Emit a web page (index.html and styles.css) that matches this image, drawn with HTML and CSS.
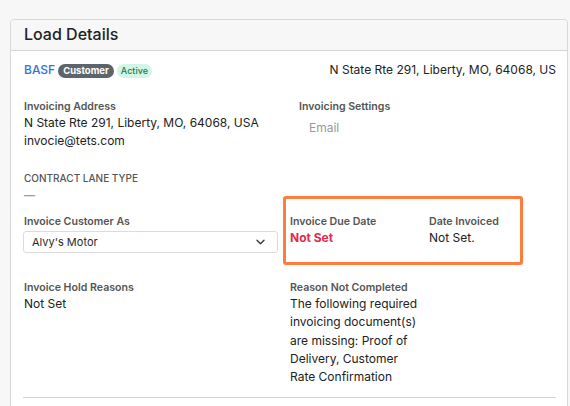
FILE: index.html
```html
<!DOCTYPE html>
<html>
<head>
<meta charset="utf-8">
<link rel="stylesheet" href="styles.css">
</head>
<body>
<div class="card">
  <div class="card-header">Load Details</div>
  <div class="card-body">
    <div class="top-row">
      <div class="customer">
        <span class="cust-name">BASF</span>
        <span class="badge badge-dark">Customer</span>
        <span class="badge badge-green">Active</span>
      </div>
      <div class="cust-address">N State Rte 291, Liberty, MO, 64068, US</div>
    </div>

    <div class="row row-1">
      <div class="field">
        <div class="label">Invoicing Address</div>
        <div class="value">N State Rte 291, Liberty, MO, 64068, USA</div>
        <div class="value">invocie@tets.com</div>
      </div>
      <div class="field">
        <div class="label">Invoicing Settings</div>
        <div class="value muted setting">Email</div>
      </div>
    </div>

    <div class="field contract">
      <div class="label upper">CONTRACT LANE TYPE</div>
      <div class="dash">—</div>
    </div>

    <div class="row row-2">
      <div class="field">
        <div class="label">Invoice Customer As</div>
        <div class="select">
          <span>Alvy's Motor</span>
          <svg width="9" height="6" viewBox="0 0 9 6"><path d="M1 1.2l3.5 3.5 3.5-3.5" fill="none" stroke="#333" stroke-width="1.3" stroke-linecap="round" stroke-linejoin="round"/></svg>
        </div>
      </div>
      <div class="subgrid highlight-group">
        <div class="field">
          <div class="label">Invoice Due Date</div>
          <div class="value danger">Not Set</div>
        </div>
        <div class="field">
          <div class="label">Date Invoiced</div>
          <div class="value">Not Set.</div>
        </div>
        <span class="annot"></span>
      </div>
    </div>

    <div class="row row-3">
      <div class="field">
        <div class="label">Invoice Hold Reasons</div>
        <div class="value">Not Set</div>
      </div>
      <div class="subgrid">
        <div class="field">
          <div class="label">Reason Not Completed</div>
          <div class="value">The following required invoicing document(s) are missing: Proof of Delivery, Customer Rate Confirmation</div>
        </div>
      </div>
    </div>

    <div class="divider"></div>
  </div>
</div>
</body>
</html>
```

FILE: styles.css
```css
* { box-sizing: border-box; }

html, body {
  margin: 0;
  padding: 0;
}

body {
  background: #f7f7f7;
  font-family: Inter, "Noto Sans", "Liberation Sans", sans-serif;
  color: #212121;
  width: 570px;
  height: 406px;
  overflow: hidden;
}

.card {
  margin: 19px 2px 0 10px;
  border: 1px solid #d8d8d8;
  border-radius: 4px;
  background: #fff;
  height: 420px;
}

.card-header {
  background: #f7f7f7;
  border-bottom: 1px solid #d4d4d4;
  border-radius: 4px 4px 0 0;
  height: 31px;
  padding: 0 13px 2px;
  line-height: 28px;
  font-size: 16px;
  font-weight: 500;
  color: #222;
}

.card-body {
  padding: 10px 11px 0 13px;
}

.top-row {
  display: flex;
  justify-content: space-between;
  align-items: center;
  height: 18px;
}

.customer {
  display: flex;
  align-items: center;
  gap: 3px;
}

.cust-name {
  color: #3572d6;
  font-size: 12px;
  font-weight: 500;
  line-height: 18px;
}

.badge {
  display: inline-block;
  font-size: 9.5px;
  line-height: 14px;
  height: 14px;
  padding: 0 5px;
  border-radius: 7px;
  font-weight: 700;
  margin-top: 1px;
}

.badge-dark {
  background: #5e646c;
  color: #fff;
}

.badge-green {
  background: #d3f5e7;
  color: #1f7a4d;
  font-size: 9px;
  font-weight: 500;
  padding: 0 4px;
}

.cust-address {
  font-size: 12px;
  line-height: 18px;
  color: #222;
}

.row {
  display: grid;
  column-gap: 12px;
}

.row-1 {
  grid-template-columns: 263px 1fr;
  margin-top: 21px;
}

.row-2 {
  grid-template-columns: 254px 1fr;
  margin-top: 13px;
}

.row-3 {
  grid-template-columns: 254px 1fr;
  margin-top: 28px;
}

.label {
  font-size: 10.6px;
  line-height: 14px;
  font-weight: 600;
  color: #555;
}

.label.upper {
  font-size: 10px;
  font-weight: 500;
}

.value {
  font-size: 12px;
  line-height: 18.4px;
  color: #222;
}

.muted { color: #9a9a9a; }

.setting {
  padding-left: 10px;
  margin-top: 5px;
}

.danger {
  color: #e02a4a;
  font-weight: 700;
}

.contract {
  margin-top: 20px;
}

.dash {
  padding-top: 3px;
  font-size: 11px;
  line-height: 14px;
  font-weight: 600;
  color: #9a9a9a;
}

.select {
  margin-top: 2px;
  margin-left: -1px;
  height: 22px;
  border: 1px solid #dcdcdc;
  border-radius: 3px;
  display: flex;
  align-items: center;
  justify-content: space-between;
  padding: 0 12px 0 8px;
  font-size: 11px;
  color: #2a2a2a;
}

.subgrid {
  display: grid;
  grid-template-columns: 132px 1fr;
  column-gap: 7px;
}

.highlight-group {
  position: relative;
}

.annot {
  position: absolute;
  left: -7px;
  top: -19px;
  width: 240px;
  height: 69px;
  border: 3px solid #ff7b3e;
  border-radius: 3px;
  pointer-events: none;
}

.divider {
  margin: 10px 0 0 -1px;
  border-top: 1px solid #d4d4d4;
}
```
